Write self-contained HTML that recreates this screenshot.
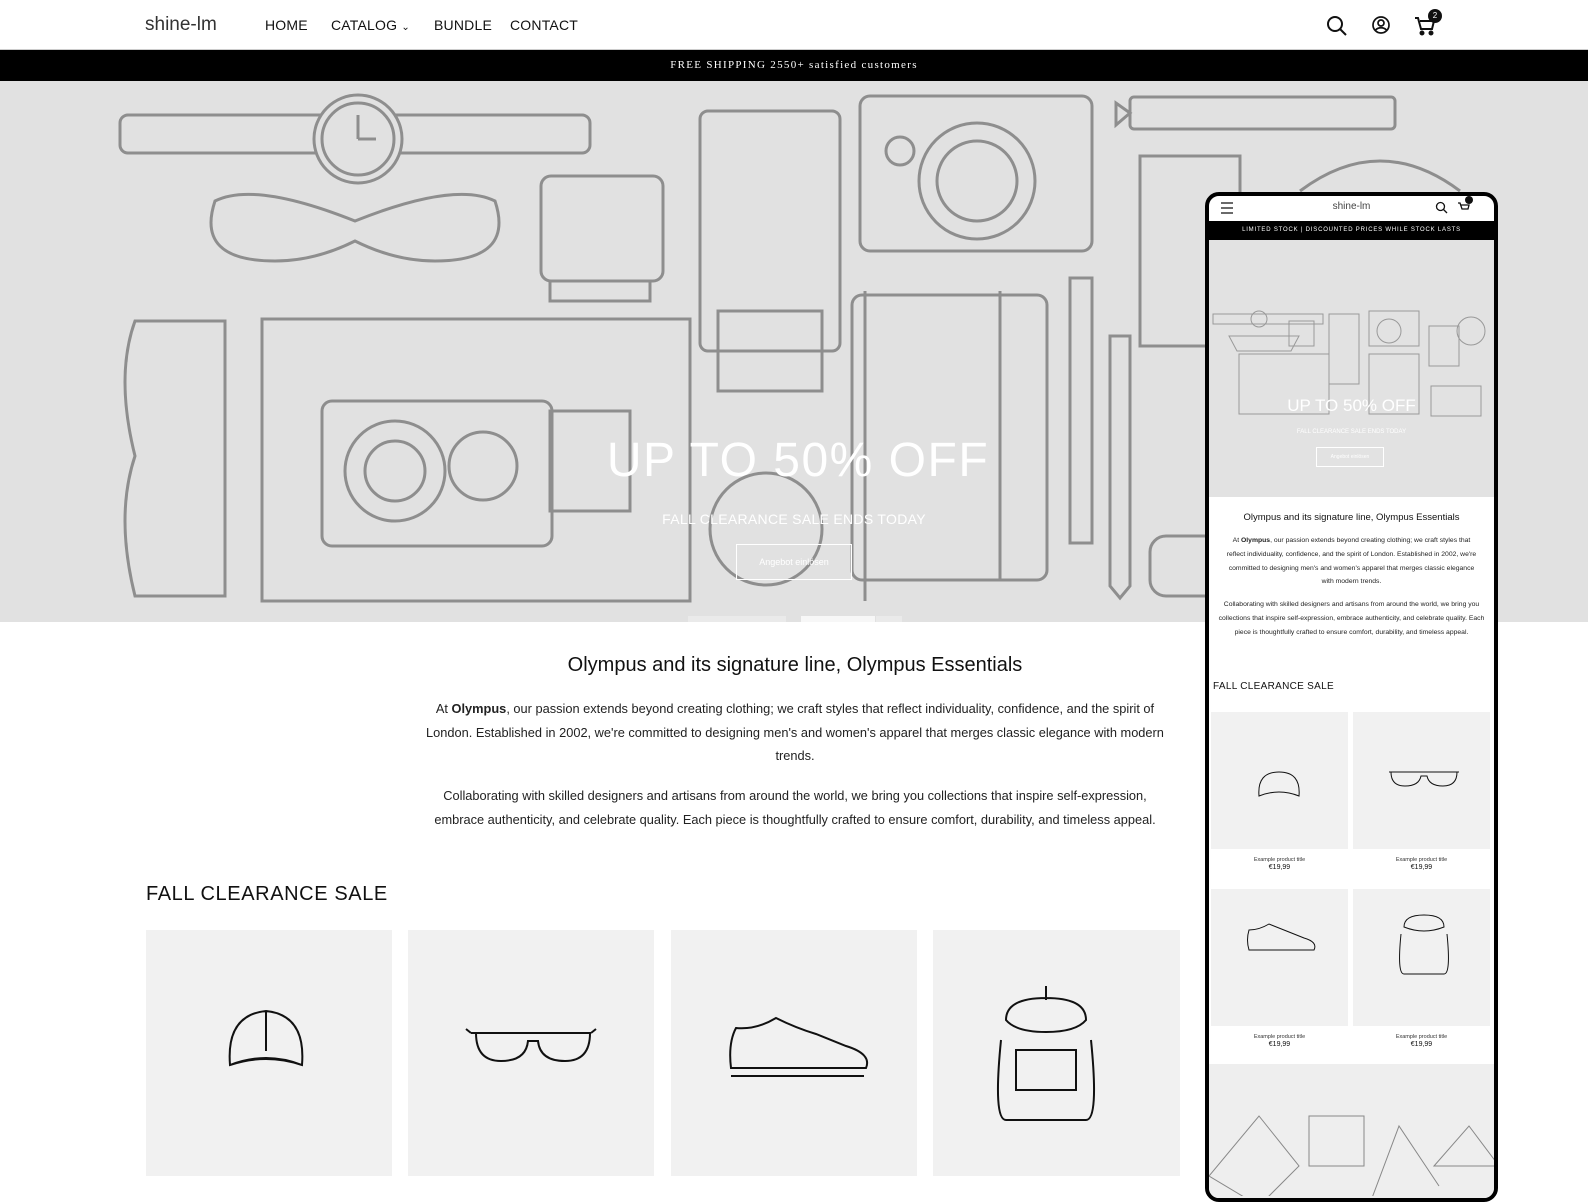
<!DOCTYPE html>
<html><head><meta charset="utf-8"><style>
*{margin:0;padding:0;box-sizing:border-box}
body{width:1588px;height:1191px;overflow:hidden;background:#fff;font-family:"Liberation Sans",sans-serif;color:#111;position:relative}
.abs{position:absolute}
.nav a{position:absolute;top:17px;font-size:14px;color:#111;letter-spacing:.2px}
.hero{left:0;top:81px;width:1588px;height:541px;background:#e1e1e1;overflow:hidden}
.hero svg{position:absolute;left:0;top:0}
.card{background:#f1f1f1}
.ctr{text-align:center}
</style></head><body>
<div class="abs" style="left:145px;top:14px;font-size:19px;color:#333">shine-lm</div>
<div class="nav">
<a style="left:265px">HOME</a>
<a style="left:331px">CATALOG <span style="font-size:10px">&#8964;</span></a>
<a style="left:434px">BUNDLE</a>
<a style="left:510px">CONTACT</a>
</div>
<svg class="abs" style="left:1325px;top:14px" width="24" height="24" viewBox="0 0 24 24" fill="none" stroke="#111" stroke-width="2"><circle cx="10" cy="10" r="7"/><path d="M15 15l6 6"/></svg>
<svg class="abs" style="left:1371px;top:15px" width="20" height="20" viewBox="0 0 20 20" fill="none" stroke="#111" stroke-width="1.7"><circle cx="10" cy="10" r="8"/><circle cx="10" cy="8" r="3"/><path d="M4.5 15c3-3 8-3 11 0"/></svg>
<svg class="abs" style="left:1414px;top:16px" width="22" height="20" viewBox="0 0 22 20" fill="none" stroke="#111" stroke-width="2"><path d="M1 2h3l3 11h11l2-8H6"/><circle cx="8" cy="17" r="1.5" fill="#111"/><circle cx="17" cy="17" r="1.5" fill="#111"/></svg>
<div class="abs" style="left:1428px;top:9px;width:14px;height:14px;border-radius:50%;background:#111;color:#fff;font-size:8px;line-height:14px;text-align:center">2</div>
<div class="abs" style="left:0;top:49px;width:1588px;height:1px;background:#ccc"></div>
<div class="abs" style="left:0;top:50px;width:1588px;height:31px;background:#000;color:#fff;font-size:11px;letter-spacing:1.3px;text-align:center;line-height:31px;font-family:'Liberation Serif',serif">FREE SHIPPING 2550+ satisfied customers</div>
<div class="abs hero">
<svg width="1588" height="541" fill="none" stroke="#8e8e8e" stroke-width="3">
<rect x="120" y="34" width="470" height="38" rx="8"/><circle cx="358" cy="58" r="44" fill="#e1e1e1"/><circle cx="358" cy="58" r="36"/><path d="M358 58V34M358 58h18"/>
<path d="M215 120q-20 60 60 60q40 0 80-20q40 20 80 20q80 0 60-60q-40-20-140 20q-100-40-140-20z"/>
<rect x="541" y="95" width="122" height="105" rx="10"/><rect x="550" y="200" width="100" height="20"/>
<rect x="700" y="30" width="140" height="240" rx="8"/><rect x="718" y="230" width="104" height="80"/>
<rect x="860" y="15" width="232" height="155" rx="10"/><circle cx="977" cy="100" r="58"/><circle cx="977" cy="100" r="40"/><circle cx="900" cy="70" r="14"/>
<rect x="1130" y="16" width="265" height="32" rx="4"/><path d="M1130 32l-14-10v22z"/>
<rect x="1140" y="75" width="100" height="190"/><path d="M1300 110q80-60 160 0"/>
<path d="M135 240h90v275h-90q-20-80 0-140q-20-80 0-135z"/>
<rect x="262" y="238" width="428" height="282"/><rect x="322" y="320" width="230" height="145" rx="10"/><circle cx="395" cy="390" r="50"/><circle cx="395" cy="390" r="30"/><circle cx="483" cy="385" r="34"/><rect x="550" y="330" width="80" height="100"/>
<circle cx="766" cy="448" r="56"/>
<rect x="852" y="214" width="195" height="285" rx="10"/><path d="M865 210v310M1000 210v290"/>
<rect x="1070" y="197" width="22" height="265"/><path d="M1110 255v250l10 12 10-12V255z"/>
<rect x="1150" y="455" width="80" height="60" rx="16"/>
</svg>
<div class="abs ctr" style="left:4px;width:1588px;top:352px;font-size:48px;color:#fff;letter-spacing:1.5px">UP TO 50% OFF</div>
<div class="abs ctr" style="left:0;width:1588px;top:430px;font-size:14px;color:#fff;letter-spacing:.3px">FALL CLEARANCE SALE ENDS TODAY</div>
<div class="abs ctr" style="left:736px;top:463px;width:116px;height:36px;border:1px solid #fff;color:#fff;font-size:9px;line-height:34px">Angebot einlösen</div>
<div class="abs" style="left:688px;top:535px;width:98px;height:6px;background:#eaeaea"></div>
<div class="abs" style="left:801px;top:535px;width:74px;height:6px;background:#f7f7f7"></div>
<div class="abs" style="left:876px;top:535px;width:26px;height:6px;background:#eaeaea"></div>
</div>
<div class="abs ctr" style="left:400px;width:790px;top:654px;font-size:20px;color:#111">Olympus and its signature line, Olympus Essentials</div>
<div class="abs ctr" style="left:385px;width:820px;top:697px;font-size:12.8px;line-height:23.7px;color:#222;white-space:nowrap">At <b>Olympus</b>, our passion extends beyond creating clothing; we craft styles that reflect individuality, confidence, and the spirit of<br>London. Established in 2002, we're committed to designing men's and women's apparel that merges classic elegance with modern<br>trends.</div>
<div class="abs ctr" style="left:385px;width:820px;top:784px;font-size:12.8px;line-height:23.7px;color:#222;white-space:nowrap">Collaborating with skilled designers and artisans from around the world, we bring you collections that inspire self-expression,<br>embrace authenticity, and celebrate quality. Each piece is thoughtfully crafted to ensure comfort, durability, and timeless appeal.</div>
<div class="abs" style="left:146px;top:883px;font-size:20px;letter-spacing:.6px;color:#111">FALL CLEARANCE SALE</div>
<div class="abs card" style="left:146px;top:930px;width:246px;height:246px"></div>
<div class="abs card" style="left:408px;top:930px;width:246px;height:246px"></div>
<div class="abs card" style="left:671px;top:930px;width:246px;height:246px"></div>
<div class="abs card" style="left:933px;top:930px;width:247px;height:246px"></div>
<svg class="abs" style="left:146px;top:930px" width="1040" height="246" fill="none" stroke="#111" stroke-width="2">
<path d="M84 135q-4-50 36-54q40 4 36 54q-36-14-72 0zM84 135q36-12 72 0M120 81v40"/>
<path d="M325 103h120M330 103q0 28 25 28q25 0 27-20h10q2 20 27 20q25 0 25-28M325 103l-5-4M445 103l5-4"/>
<path d="M585 138h135q6-14-20-22l-30-12q-20-6-40-16q-20 12-40 10q-8 15-5 40zM585 146h133"/>
<path d="M860 90q0-22 40-22q40 0 40 22q-10 12-40 12q-30 0-40-12zM855 110q-8 80 5 80h80q13 0 5-80M870 120h60v40h-60zM900 70v-14"/>
</svg>
<div class="abs" style="left:1205px;top:192px;width:293px;height:1010px;border:4px solid #000;border-radius:14px;background:#fff;overflow:hidden">
<svg class="abs" style="left:11px;top:6px" width="14" height="12" stroke="#111" stroke-width="1.3"><path d="M1 1h12M1 6h12M1 11h12"/></svg>
<div class="abs ctr" style="left:0;width:285px;top:5px;font-size:10px;color:#444">shine-lm</div>
<svg class="abs" style="left:226px;top:5px" width="13" height="13" fill="none" stroke="#111" stroke-width="1.3"><circle cx="5.5" cy="5.5" r="4"/><path d="M8.5 8.5l3.5 3.5"/></svg>
<svg class="abs" style="left:249px;top:6px" width="12" height="11" fill="none" stroke="#111" stroke-width="1.3"><path d="M0 1h2l2 6h6l1-4H3"/></svg>
<div class="abs" style="left:256px;top:0px;width:8px;height:8px;border-radius:50%;background:#111"></div>
<div class="abs ctr" style="left:0;top:25px;width:285px;height:19px;background:#000;color:#fff;font-size:6px;letter-spacing:.8px;line-height:19px">LIMITED STOCK | DISCOUNTED PRICES WHILE STOCK LASTS</div>
<div class="abs" style="left:0;top:44px;width:285px;height:257px;background:#e2e2e2"></div>
<svg class="abs" style="left:0;top:110px" width="285" height="120" fill="none" stroke="#999" stroke-width="1"><rect x="4" y="8" width="110" height="10"/><circle cx="50" cy="13" r="8"/><path d="M20 30h70l-8 15H28z"/><rect x="30" y="48" width="90" height="60"/><rect x="80" y="15" width="25" height="25"/><rect x="120" y="8" width="30" height="70"/><rect x="160" y="5" width="50" height="35"/><circle cx="180" cy="25" r="12"/><rect x="160" y="48" width="50" height="60"/><rect x="220" y="20" width="30" height="40"/><circle cx="262" cy="25" r="14"/><rect x="222" y="80" width="50" height="30"/></svg>
<div class="abs ctr" style="left:0;width:285px;top:200px;font-size:17px;color:#fff">UP TO 50% OFF</div>
<div class="abs ctr" style="left:0;width:285px;top:233px;font-size:6px;color:#fff">FALL CLEARANCE SALE ENDS TODAY</div>
<div class="abs ctr" style="left:107px;top:251px;width:68px;height:20px;border:1px solid #fff;color:#fff;font-size:5px;line-height:18px">Angebot einlösen</div>
<div class="abs ctr" style="left:0;width:285px;top:316px;font-size:9.5px">Olympus and its signature line, Olympus Essentials</div>
<div class="abs ctr" style="left:16px;width:253px;top:338px;font-size:6.8px;line-height:13.8px;color:#222">At <b>Olympus</b>, our passion extends beyond creating clothing; we craft styles that reflect individuality, confidence, and the spirit of London. Established in 2002, we're committed to designing men's and women's apparel that merges classic elegance with modern trends.</div>
<div class="abs ctr" style="left:8px;width:269px;top:402px;font-size:6.8px;line-height:13.8px;color:#222">Collaborating with skilled designers and artisans from around the world, we bring you collections that inspire self-expression, embrace authenticity, and celebrate quality. Each piece is thoughtfully crafted to ensure comfort, durability, and timeless appeal.</div>
<div class="abs" style="left:4px;top:485px;font-size:10px;letter-spacing:.3px">FALL CLEARANCE SALE</div>
<div class="abs card" style="left:2px;top:516px;width:137px;height:137px"></div>
<div class="abs card" style="left:144px;top:516px;width:137px;height:137px"></div>
<div class="abs card" style="left:2px;top:693px;width:137px;height:137px"></div>
<div class="abs card" style="left:144px;top:693px;width:137px;height:137px"></div>
<svg class="abs" style="left:0;top:516px" width="285" height="320" fill="none" stroke="#111" stroke-width="1"><path d="M50 84q-2-24 20-24q22 0 20 24q-20-8-40 0z"/><path d="M180 60h70M182 60q0 14 14 14q14 0 16-10h6q2 10 16 10q14 0 14-14"/><path d="M40 238h65q4-8-10-12l-15-6q-10-4-20-8q-10 6-20 6q-3 10 0 20z"/><path d="M195 215q0-12 20-12q20 0 20 12q-20 8-40 0zM192 222q-4 40 3 40h40q7 0 3-40"/></svg>
<div class="abs ctr" style="left:2px;width:137px;top:660px;font-size:5.5px;color:#333;line-height:8px">Example product title<br><span style="font-size:7px;color:#111">€19,99</span></div>
<div class="abs ctr" style="left:144px;width:137px;top:660px;font-size:5.5px;color:#333;line-height:8px">Example product title<br><span style="font-size:7px;color:#111">€19,99</span></div>
<div class="abs ctr" style="left:2px;width:137px;top:837px;font-size:5.5px;color:#333;line-height:8px">Example product title<br><span style="font-size:7px;color:#111">€19,99</span></div>
<div class="abs ctr" style="left:144px;width:137px;top:837px;font-size:5.5px;color:#333;line-height:8px">Example product title<br><span style="font-size:7px;color:#111">€19,99</span></div>
<div class="abs" style="left:0;top:868px;width:285px;height:150px;background:#eeeeee"></div>
<svg class="abs" style="left:0;top:900px" width="285" height="100" fill="none" stroke="#888" stroke-width="1"><path d="M0 80l50-60 40 50-40 40zM100 20h55v50h-55zM160 110l30-80 40 60M225 70l35-40 30 40z"/></svg>
</div>
</body></html>
